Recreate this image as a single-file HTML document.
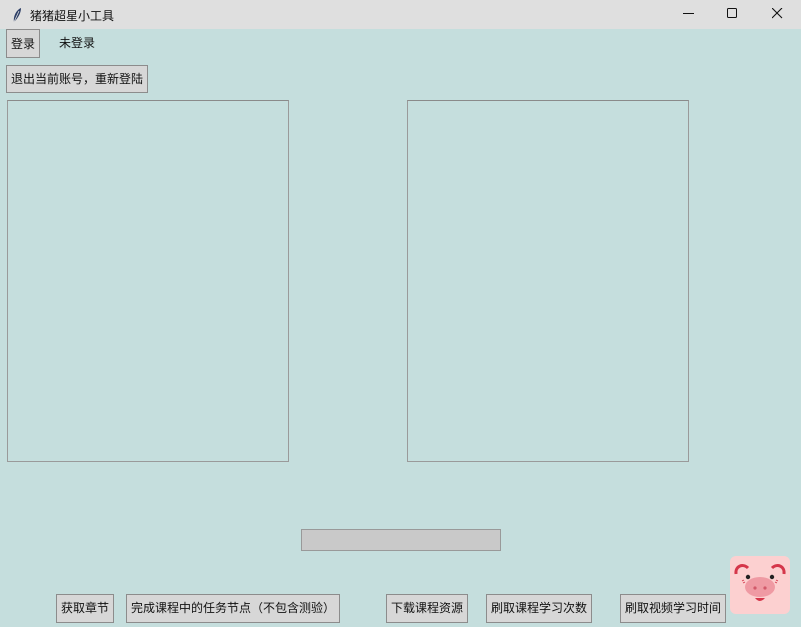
<!DOCTYPE html>
<html><head><meta charset="utf-8"><style>
*{margin:0;padding:0;box-sizing:border-box}
body{width:801px;height:627px;overflow:hidden;background:#c5dedd;position:relative;font-family:"Liberation Sans","Noto Sans CJK SC",sans-serif;font-size:12px;color:#111}
.title{position:absolute;left:0;top:0;width:801px;height:29px;background:#dfdfdf}
.title span{position:absolute;left:30px;top:7px;font-size:12px}
.b{position:absolute;background:#d7d7d7;border:1px solid #8c8c8c;font-size:12px;text-align:center;line-height:26px;white-space:nowrap}
.box{position:absolute;border:1px solid #9a9a9a;border-top-color:#8a8a8a;background:#c5dedd}
</style></head><body>
<div class="title">
<svg style="position:absolute;left:11px;top:7px" width="12" height="16" viewBox="0 0 12 16"><path d="M3 15 C2 10 5 3 10 1 C10 6 7 11 3 15Z" fill="#2c3e66"/><path d="M3 15 L8 4" stroke="#dfdfdf" stroke-width="0.8"/></svg>
<span>猪猪超星小工具</span>
<svg style="position:absolute;left:683px;top:13px" width="11" height="2"><rect width="11" height="1" fill="#111"/></svg>
<svg style="position:absolute;left:727px;top:8px" width="11" height="11"><rect x="0.5" y="0.5" width="9" height="9" rx="1" fill="none" stroke="#111"/></svg>
<svg style="position:absolute;left:772px;top:8px" width="11" height="11"><path d="M0 0L10 10M10 0L0 10" stroke="#111" stroke-width="1.1"/></svg>
</div>
<div class="b" style="left:6px;top:29px;width:34px;height:29px;line-height:28px">登录</div>
<div style="position:absolute;left:59px;top:34px">未登录</div>
<div class="b" style="left:6px;top:65px;width:142px;height:28px">退出当前账号，重新登陆</div>
<div class="box" style="left:7px;top:100px;width:282px;height:362px"></div>
<div class="box" style="left:407px;top:100px;width:282px;height:362px"></div>
<div style="position:absolute;left:301px;top:529px;width:200px;height:22px;background:#c9c9c9;border:1px solid #999"></div>
<div class="b" style="left:56px;top:594px;width:58px;height:29px">获取章节</div>
<div class="b" style="left:126px;top:594px;width:214px;height:29px">完成课程中的任务节点（不包含测验）</div>
<div class="b" style="left:386px;top:594px;width:82px;height:29px">下载课程资源</div>
<div class="b" style="left:486px;top:594px;width:106px;height:29px">刷取课程学习次数</div>
<div class="b" style="left:620px;top:594px;width:106px;height:29px">刷取视频学习时间</div>
<svg style="position:absolute;left:730px;top:556px" width="60" height="58" viewBox="0 0 60 58">
<rect x="0" y="0" width="60" height="58" rx="6" fill="#fcd0d0"/>
<path d="M6 18 C5 10 13 7 18 12" fill="none" stroke="#d5364a" stroke-width="3"/>
<path d="M42 12 C47 7 55 10 54 18" fill="none" stroke="#d5364a" stroke-width="3"/>
<circle cx="18" cy="21" r="2.2" fill="#222"/><circle cx="42" cy="21" r="2.2" fill="#222"/>
<path d="M12 25 L14 24 M13 27 L15 26 M46 24 L48 25 M45 26 L47 27" stroke="#d5364a" stroke-width="0.8"/>
<ellipse cx="30" cy="31" rx="15" ry="10" fill="#ef9aa3"/>
<circle cx="25" cy="32" r="1.6" fill="#d25a6a"/><circle cx="35" cy="32" r="1.6" fill="#d25a6a"/>
<path d="M25 42 Q30 48 35 42Z" fill="#d5364a"/>
</svg>
</body></html>
